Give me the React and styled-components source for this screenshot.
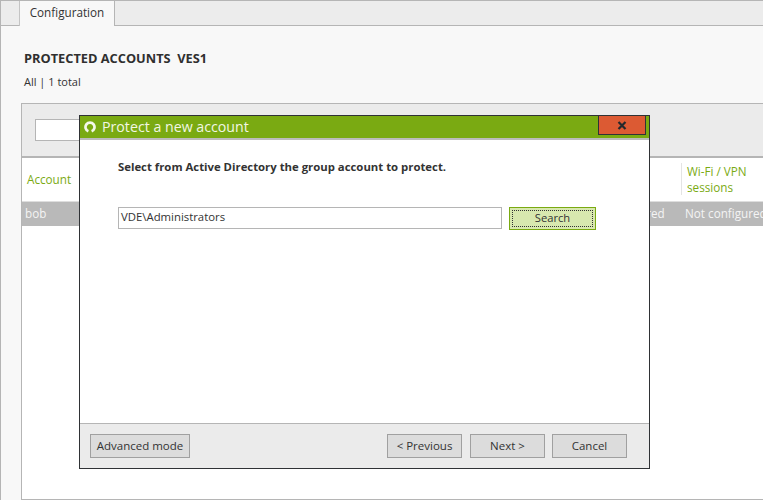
import React from "react";
import styled, { createGlobalStyle } from "styled-components";

const Global = createGlobalStyle`
  html, body { margin: 0; padding: 0; background: #f8f8f8; }
  body { font-family: "Open Sans", "Noto Sans", "Liberation Sans", sans-serif; font-size: 12px; color: #333; }
  * { box-sizing: border-box; }
`;

const Page = styled.div`
  position: relative;
  width: 763px;
  height: 500px;
  overflow: hidden;
  background: #f8f8f8;
  border-left: 1px solid #b5b5b5;
  border-top: 1px solid #b5b5b5;
  display: flex;
  flex-direction: column;
`;
const TabStrip = styled.div`
  height: 25px;
  flex: none;
  display: flex;
  padding-left: 18px;
  background: #ececec;
  border-bottom: 1px solid #b5b5b5;
`;
const Tab = styled.div`
  width: 96px;
  height: 25px;
  background: #f8f8f8;
  border-left: 1px solid #c4c4c4;
  border-right: 1px solid #b5b5b5;
  text-align: center;
  line-height: 22px;
  font-size: 11.7px;
`;
const Body = styled.div`
  flex: 1;
  display: flex;
  flex-direction: column;
  padding: 23px 0 0 20px;
  min-height: 0;
`;
const Heading = styled.h1`
  margin: 0 0 0 3px;
  font-size: 12.8px;
  line-height: 18px;
  font-weight: 700;
  color: #2f2f2f;
`;
const Summary = styled.div`
  margin: 7px 0 0 3px;
  line-height: 16px;
  font-size: 11px;
`;
const Panel = styled.div`
  margin-top: 13px;
  flex: 1;
  border: 1px solid #b5b5b5;
  border-right: 0;
  background: #fff;
  display: flex;
  flex-direction: column;
`;
const Toolbar = styled.div`
  height: 54px;
  flex: none;
  padding: 15px 13px;
  background: #ebebeb;
  border-bottom: 2px solid #b5b5b5;
`;
const FilterInput = styled.div`
  width: 120px;
  height: 22px;
  background: #fff;
  border: 1px solid #b5b5b5;
`;
const Row = styled.div`
  display: grid;
  grid-template-columns: 558px 101px 1fr;
  height: ${p => p.$h}px;
  flex: none;
  align-items: center;
  padding-bottom: 2px;
  background: ${p => p.$bg};
  color: ${p => p.$color};
  border-bottom: ${p => p.$line ? "1px solid #dedede" : "0"};
  font-size: 11.7px;
  white-space: nowrap;
`;
const Cell = styled.div`
  padding-left: ${p => p.$pad}px;
  line-height: 16px;
  overflow: hidden;
  align-self: center;
  ${p => p.$divider ? "border-left: 1px solid #e4e4e4;" : ""}
`;

const Dialog = styled.div`
  position: absolute;
  left: 78px;
  top: 114px;
  width: 571px;
  height: 354px;
  border: 1px solid #2f3235;
  background: #fff;
  display: flex;
  flex-direction: column;
`;
const TitleBar = styled.div`
  height: 24px;
  flex: none;
  display: flex;
  align-items: flex-start;
  background: #7aaa12;
  border-bottom: 2px solid #bcbcbc;
  color: #f4f8e8;
  position: relative;
`;
const TitleIcon = styled.svg`
  width: 12px;
  height: 12px;
  margin: 5px 0 0 4px;
  flex: none;
`;
const TitleText = styled.div`
  margin-left: 6px;
  font-size: 14.2px;
  line-height: 22px;
  color: #f2f7e4;
`;
const CloseButton = styled.div`
  position: absolute;
  left: 518px;
  top: -1px;
  width: 48px;
  height: 20px;
  background: #dc5a33;
  border: 1px solid #2f3235;
  display: flex;
  align-items: center;
  justify-content: center;
`;
const Content = styled.div`
  flex: 1;
  padding: 18px 38px 0;
`;
const Prompt = styled.div`
  font-size: 11.35px;
  font-weight: 700;
  line-height: 18px;
  color: #333;
`;
const SearchRow = styled.div`
  display: flex;
  align-items: flex-start;
  gap: 7px;
  margin-top: 31px;
`;
const TextBox = styled.div`
  width: 384px;
  height: 22px;
  border: 1px solid #b5b5b5;
  padding-left: 2px;
  font-size: 11.35px;
  line-height: 18px;
  color: #333;
`;
const SearchButton = styled.div`
  width: 87px;
  height: 23px;
  background: #d8e8af;
  border: 1px solid #7aaa12;
  padding: 2px;
  font-size: 11.2px;
`;
const FocusRing = styled.div`
  height: 100%;
  border: 1px dotted #333;
  text-align: center;
  line-height: 13px;
`;
const Footer = styled.div`
  height: 45px;
  flex: none;
  background: #ebebeb;
  border-top: 1px solid #b5b5b5;
  display: flex;
  align-items: flex-start;
  padding: 10px 22px 0 10px;
`;
const FootButton = styled.div`
  width: ${p => p.$w}px;
  height: 24px;
  margin-left: ${p => p.$ml || 0}px;
  background: #dcdcdc;
  border: 1px solid #a0a0a0;
  text-align: center;
  line-height: 21px;
  font-size: 11.5px;
`;
const Spacer = styled.div`
  flex: 1;
`;

export default function App() {
  return (
    <Page>
      <Global />
      <TabStrip>
        <Tab>Configuration</Tab>
      </TabStrip>
      <Body>
        <Heading>PROTECTED ACCOUNTS&nbsp; VES1</Heading>
        <Summary>All | 1 total</Summary>
        <Panel>
          <Toolbar>
            <FilterInput />
          </Toolbar>
          <Row $h={44} $bg="#fff" $color="#7aaa12" $line>
            <Cell $pad={5}>Account</Cell>
            <Cell $pad={2}></Cell>
            <Cell $pad={5} $divider>Wi-Fi / VPN<br />sessions</Cell>
          </Row>
          <Row $h={24} $bg="#b9b9b9" $color="#f4f4f4">
            <Cell $pad={3}>bob</Cell>
            <Cell $pad={3}>Not configured</Cell>
            <Cell $pad={4}>Not configured</Cell>
          </Row>
        </Panel>
      </Body>
      <Dialog>
        <TitleBar>
          <TitleIcon viewBox="0 0 12 12">
            <path d="M4.4 10.3 A4.5 4.5 0 1 1 7.6 10.3" stroke="#f4f8ea" strokeWidth="2.7" fill="none" />
          </TitleIcon>
          <TitleText>Protect a new account</TitleText>
          <CloseButton>
            <svg width="10" height="9" viewBox="0 0 10 9">
              <path d="M1.5 1 L8.5 8 M8.5 1 L1.5 8" stroke="#23282c" strokeWidth="2.2" fill="none" />
            </svg>
          </CloseButton>
        </TitleBar>
        <Content>
          <Prompt>Select from Active Directory the group account to protect.</Prompt>
          <SearchRow>
            <TextBox>VDE\Administrators</TextBox>
            <SearchButton><FocusRing>Search</FocusRing></SearchButton>
          </SearchRow>
        </Content>
        <Footer>
          <FootButton $w={100}>Advanced mode</FootButton>
          <Spacer />
          <FootButton $w={75}>&lt; Previous</FootButton>
          <FootButton $w={75} $ml={8}>Next &gt;</FootButton>
          <FootButton $w={75} $ml={7}>Cancel</FootButton>
        </Footer>
      </Dialog>
    </Page>
  );
}
